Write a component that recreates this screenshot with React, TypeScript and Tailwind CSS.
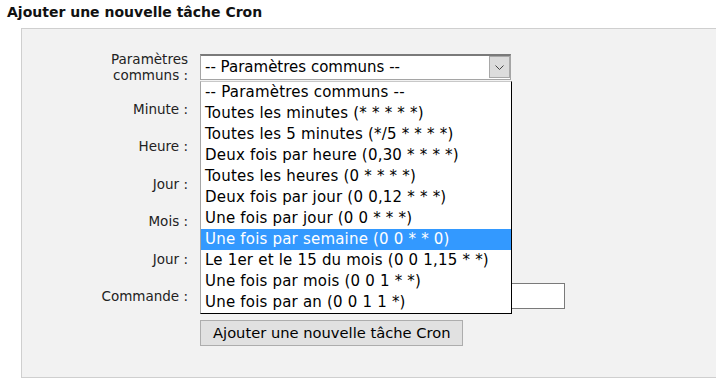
import type { ReactNode } from "react";

const options = [
  "-- Paramètres communs --",
  "Toutes les minutes (* * * * *)",
  "Toutes les 5 minutes (*/5 * * * *)",
  "Deux fois par heure (0,30 * * * *)",
  "Toutes les heures (0 * * * *)",
  "Deux fois par jour (0 0,12 * * *)",
  "Une fois par jour (0 0 * * *)",
  "Une fois par semaine (0 0 * * 0)",
  "Le 1er et le 15 du mois (0 0 1,15 * *)",
  "Une fois par mois (0 0 1 * *)",
  "Une fois par an (0 0 1 1 *)",
];

const selected = 7;

const Row = ({ label, children }: { label: ReactNode; children?: ReactNode }) => (
  <div className="flex items-center h-[37.5px]">
    <div className="w-[166px] text-right text-[13.5px] leading-4 text-[#222]">{label}</div>
    <div className="ml-3">{children}</div>
  </div>
);

const Input = ({ width }: { width: string }) => (
  <div className={`h-[26px] ${width} bg-white border border-[#7a7a7a]`} />
);

const App = () => {
  return (
    <div
      className="w-[716px] h-[384px] overflow-hidden bg-white text-black"
      style={{ fontFamily: '"DejaVu Sans", Verdana, sans-serif' }}
    >
      <h2 className="pt-1 pl-[7px] h-5 text-[14px] leading-4 font-bold text-[#111]">
        Ajouter une nouvelle tâche Cron
      </h2>
      <div className="mt-2 ml-[21px] w-[720px] bg-[#f2f2f2] border border-[#cfcfcf] pt-[22px] pb-[31px]">
        <div className="flex items-center h-8">
          <div className="w-[166px] text-right text-[13.5px] leading-4 text-[#222]">
            Paramètres
            <br />
            communs :
          </div>
          <div className="ml-3 relative w-[311px]">
            <div className="flex items-start justify-between h-[26px] bg-white border border-[#a5a5a5] border-t-2 border-t-[#7a7a7a]">
              <span className="pl-1 text-[15px] leading-[22px]">-- Paramètres communs --</span>
              <span className="flex items-center justify-center w-[21px] h-[22px] bg-[#dcdcdc] border border-[#a8a8a8]">
                <svg width="9" height="5" viewBox="0 0 9 5" fill="none">
                  <path d="M0.5 0.5 L4.5 4.5 L8.5 0.5" stroke="#444" strokeWidth="1" />
                </svg>
              </span>
            </div>
            <ul className="absolute z-10 left-0 top-[27px] w-[312px] bg-white border-t border-t-[#c8c8c8] border-l border-l-[#a5a5a5] border-r border-r-black border-b border-b-black">
              {options.map((opt, i) => (
                <li
                  key={i}
                  className={
                    i === selected
                      ? "h-[21px] pl-1 text-[15px] leading-[21px] tracking-[0.2px] whitespace-nowrap bg-[#3399ff] text-white"
                      : "h-[21px] pl-1 text-[15px] leading-[21px] tracking-[0.2px] whitespace-nowrap text-black"
                  }
                >
                  {opt}
                </li>
              ))}
            </ul>
          </div>
        </div>
        <div className="mt-[7px]">
          <Row label="Minute :">
            <Input width="w-[80px]" />
          </Row>
          <Row label="Heure :">
            <Input width="w-[80px]" />
          </Row>
          <Row label="Jour :">
            <Input width="w-[80px]" />
          </Row>
          <Row label="Mois :">
            <Input width="w-[80px]" />
          </Row>
          <Row label="Jour :">
            <Input width="w-[80px]" />
          </Row>
          <Row label="Commande :">
            <Input width="w-[365px]" />
          </Row>
        </div>
        <div className="mt-[5px] ml-[178px]">
          <button className="h-[26px] w-[263px] pl-3 text-left bg-[#e1e1e1] border border-[#adadad] text-[14.7px] leading-[24px] text-black whitespace-nowrap">
            Ajouter une nouvelle tâche Cron
          </button>
        </div>
      </div>
    </div>
  );
};

export default App;
